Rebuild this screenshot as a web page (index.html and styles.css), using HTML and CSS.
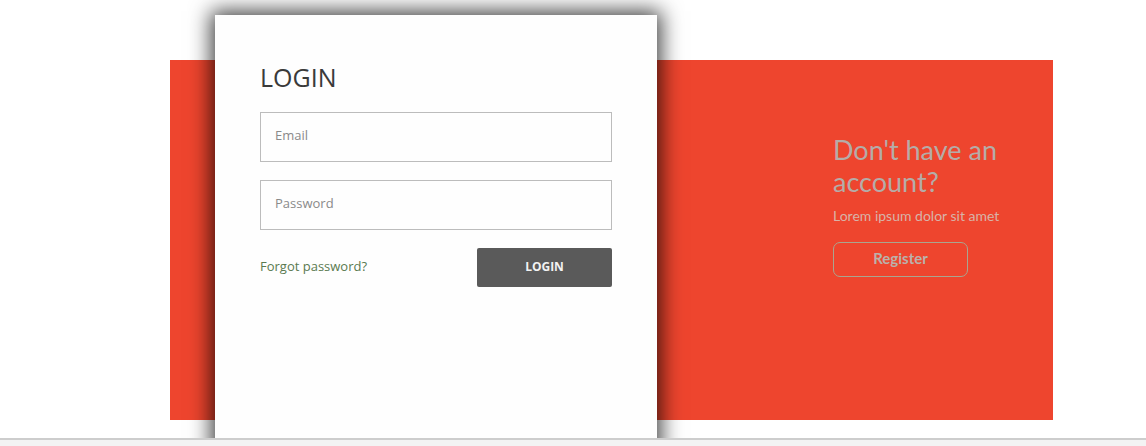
FILE: index.html
```html
<!DOCTYPE html>
<html lang="en">
<head>
<meta charset="utf-8">
<title>Login</title>
<link rel="stylesheet" href="styles.css">
</head>
<body>
<div class="stage">
  <div class="panel"></div>
  <div class="card">
    <h1 class="title">LOGIN</h1>
    <div class="field"><span class="ph">Email</span></div>
    <div class="field"><span class="ph">Password</span></div>
    <div class="actions">
      <a class="forgot" href="#">Forgot password?</a>
      <button class="btn-login" type="button">LOGIN</button>
    </div>
  </div>
  <div class="aside">
    <h2 class="aside-title">Don't have an account?</h2>
    <p class="aside-text">Lorem ipsum dolor sit amet</p>
    <button class="btn-register" type="button">Register</button>
  </div>
</div>
<div class="bottom-bar"></div>
</body>
</html>
```
FILE: styles.css
```css
html, body {
  margin: 0;
  padding: 0;
  height: 100%;
  overflow: hidden;
  background: #ffffff;
}
body {
  font-family: "Open Sans", "Liberation Sans", sans-serif;
}
.stage {
  display: grid;
  grid-template-columns: 45px 442px 1fr;
  grid-template-rows: 45px 360px auto;
  width: 883px;
  margin: 15px 0 0 170px;
}
.panel {
  grid-column: 1 / -1;
  grid-row: 2;
  background: #ee452e;
}
.card {
  grid-column: 2;
  grid-row: 1 / 4;
  height: 440px;
  background: #fefefe;
  box-shadow: 0 0 20px 4px rgba(0, 0, 0, 0.75);
  padding: 0 45px;
  box-sizing: border-box;
  z-index: 1;
}
.title {
  margin: 45px 0 0 0;
  font-size: 25px;
  font-weight: 400;
  line-height: 34px;
  color: #3a3a3a;
}
.field {
  height: 50px;
  border: 1px solid #bcbcbc;
  box-sizing: border-box;
  display: flex;
  align-items: center;
  padding: 0 0 4px 14px;
  margin-top: 18px;
}
.ph {
  font-size: 13px;
  color: #8a8a8a;
}
.actions {
  display: flex;
  justify-content: space-between;
  align-items: center;
  margin-top: 18px;
}
.forgot {
  font-size: 13px;
  color: #5a7a50;
  text-decoration: none;
  padding-bottom: 4px;
}
.btn-login {
  width: 135px;
  height: 39px;
  border: none;
  border-radius: 2px;
  background: #5a5a5a;
  color: #f2f2f2;
  font-family: "Open Sans", "Liberation Sans", sans-serif;
  font-weight: 700;
  font-size: 12px;
  padding: 0 0 2px 0;
}
.aside {
  grid-column: 3;
  grid-row: 2;
  padding: 74px 0 0 176px;
  z-index: 1;
}
.aside-title {
  margin: 0;
  font-family: "Lato", "Open Sans", sans-serif;
  font-weight: 400;
  font-size: 27px;
  line-height: 32px;
  color: #b5aca8;
  width: 180px;
}
.aside-text {
  margin: 9px 0 0 0;
  font-family: "Lato", "Open Sans", sans-serif;
  font-size: 14px;
  line-height: 18px;
  color: #d8b3a8;
}
.btn-register {
  margin-top: 17px;
  width: 135px;
  height: 35px;
  background: transparent;
  border: 1px solid #aaa58f;
  border-radius: 7px;
  color: #bab1ab;
  font-family: "Lato", "Open Sans", sans-serif;
  font-weight: 700;
  font-size: 15px;
  padding: 0 0 4px 0;
}
.bottom-bar {
  position: fixed;
  left: 0;
  right: 0;
  bottom: 0;
  height: 8px;
  background: #f3f3f3;
  border-top: 2px solid #cdcdcd;
  box-sizing: border-box;
  z-index: 2;
}
```
